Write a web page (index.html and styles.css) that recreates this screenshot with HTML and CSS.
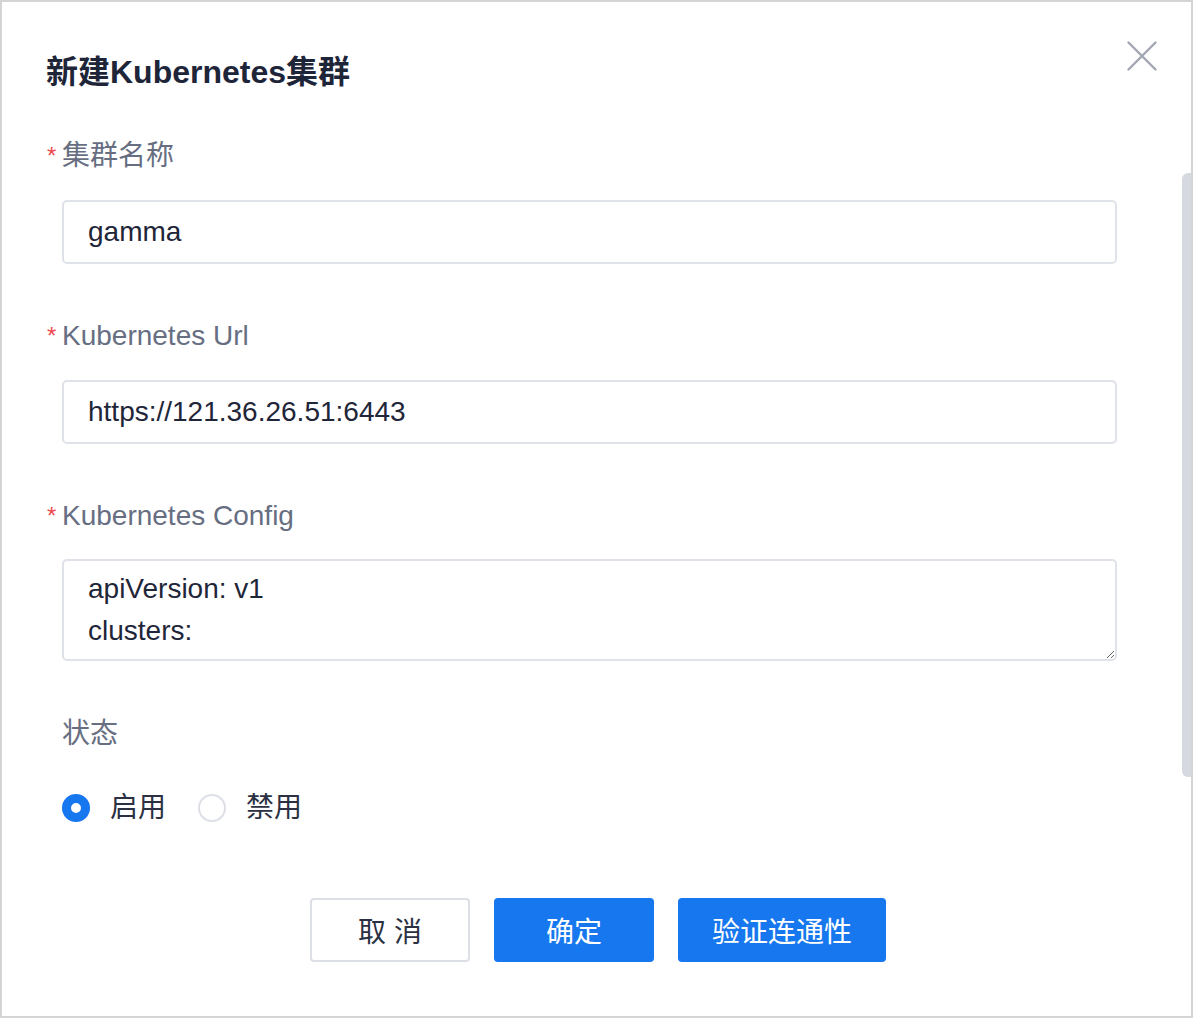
FILE: index.html
```html
<!DOCTYPE html>
<html lang="zh-CN">
<head>
<meta charset="utf-8">
<title>新建Kubernetes集群</title>
<link rel="stylesheet" href="styles.css">
</head>
<body>
<div class="frame">
  <div class="header">
    <h1 class="title">新建Kubernetes集群</h1>
    <button class="close" aria-label="关闭">
      <svg width="30" height="30" viewBox="0 0 30 30"><path d="M1.5 1.5 L28.5 28.5 M28.5 1.5 L1.5 28.5" stroke="#a1a6b0" stroke-width="2.4" stroke-linecap="round" fill="none"/></svg>
    </button>
  </div>
  <div class="form">
    <div class="item">
      <div class="label"><span class="req">*</span>集群名称</div>
      <div class="input">gamma</div>
    </div>
    <div class="item">
      <div class="label"><span class="req">*</span>Kubernetes Url</div>
      <div class="input">https://121.36.26.51:6443</div>
    </div>
    <div class="item item-ta">
      <div class="label"><span class="req">*</span>Kubernetes Config</div>
      <textarea class="textarea" spellcheck="false">apiVersion: v1
clusters:</textarea>
    </div>
    <div class="item status">
      <div class="label">状态</div>
      <div class="radios">
        <span class="radio checked"></span><span class="rtext">启用</span>
        <span class="radio"></span><span class="rtext">禁用</span>
      </div>
    </div>
  </div>
  <div class="footer">
    <button class="btn btn-default">取 消</button>
    <button class="btn btn-primary">确定</button>
    <button class="btn btn-primary btn-wide">验证连通性</button>
  </div>
  <div class="thumb"></div>
</div>
</body>
</html>
```
FILE: styles.css
```css
html, body {
  margin: 0;
  padding: 0;
  background: #ffffff;
}
body {
  font-family: "Liberation Sans", "Noto Sans CJK SC", sans-serif;
}
.frame {
  position: relative;
  width: 1193px;
  height: 1018px;
  box-sizing: border-box;
  border: 2px solid #d4d4d4;
  background: #ffffff;
  overflow: hidden;
}
.header {
  display: flex;
  justify-content: space-between;
  align-items: flex-start;
  padding: 39px 34px 0 44px;
}
.title {
  margin: 9px 0 0 0;
  font-size: 32px;
  line-height: 44px;
  font-weight: bold;
  color: #1e2539;
}
.close {
  border: 0;
  padding: 0;
  background: transparent;
  width: 30px;
  height: 30px;
  display: block;
}
.close svg {
  display: block;
}
.form {
  padding: 42px 74px 0 60px;
}
.item {
  margin-bottom: 52px;
}
.item-ta {
  margin-bottom: 53px;
}
.item-ta .label {
  margin-bottom: 23px;
}
.label {
  font-size: 28px;
  line-height: 40px;
  color: #676e82;
  margin-bottom: 24px;
}
.req {
  display: inline-block;
  width: 15px;
  margin-left: -15px;
  color: #ef4a4f;
  font-size: 24px;
  vertical-align: top;
  line-height: 40px;
}
.input {
  height: 64px;
  box-sizing: border-box;
  border: 2px solid #dfe2e8;
  border-radius: 5px;
  padding: 0 24px;
  font-size: 28px;
  line-height: 60px;
  color: #1f2639;
}
.textarea {
  display: block;
  width: 100%;
  height: 102px;
  box-sizing: border-box;
  border: 2px solid #dfe2e8;
  border-radius: 5px;
  padding: 7px 24px 0 24px;
  margin: 0;
  font-family: "Liberation Sans", "Noto Sans CJK SC", sans-serif;
  font-size: 28px;
  line-height: 42px;
  color: #1f2639;
  resize: vertical;
  outline: none;
  overflow: hidden;
}
.status {
  margin-bottom: 0;
}
.status .label {
  margin-bottom: 34px;
}
.radios {
  display: flex;
  align-items: center;
  height: 40px;
}
.radio {
  width: 28px;
  height: 28px;
  box-sizing: border-box;
  border-radius: 50%;
  border: 2px solid #dcdfe6;
  background: #ffffff;
  margin-right: 20px;
}
.radio.checked {
  border: 9px solid #1677ee;
  background: #ffffff;
}
.rtext {
  font-size: 28px;
  line-height: 40px;
  color: #2b3143;
  margin-right: 32px;
}
.footer {
  display: flex;
  justify-content: center;
  gap: 24px;
  margin-top: 70px;
  padding-left: 3px;
}
.btn {
  height: 64px;
  width: 160px;
  box-sizing: border-box;
  border-radius: 4px;
  font-family: "Liberation Sans", "Noto Sans CJK SC", sans-serif;
  font-size: 28px;
  padding: 0;
}
.btn-default {
  border: 2px solid #dcdfe6;
  background: #ffffff;
  color: #2b3143;
}
.btn-primary {
  border: 0;
  background: #1677ee;
  color: #ffffff;
}
.btn-wide {
  width: 208px;
}
.thumb {
  position: absolute;
  right: 0;
  top: 171px;
  width: 9px;
  height: 604px;
  background: #d6d9e0;
  border-radius: 6px 0 0 6px;
}
```
